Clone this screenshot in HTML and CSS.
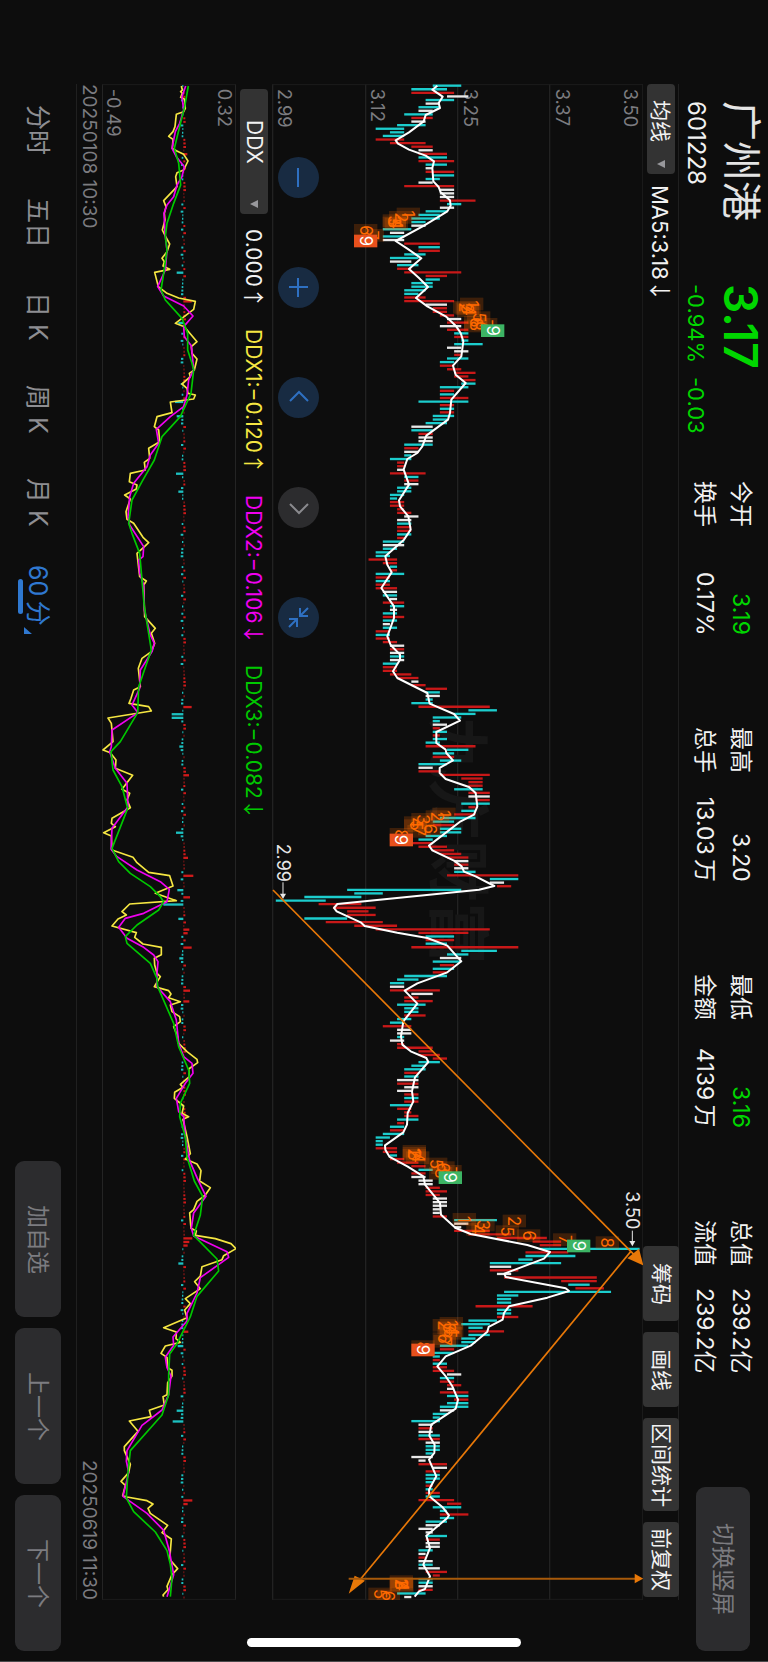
FILE: index.html
```html
<!DOCTYPE html>
<html lang="zh-CN">
<head>
<meta charset="UTF-8">
<meta name="viewport" content="width=device-width, initial-scale=1.0">
<title>广州港 601228</title>
<link rel="stylesheet" href="styles.css">
</head>
<body>
<header class="quote">
  <div class="stock">
    <h1>广州港</h1>
    <span class="code">601228</span>
  </div>
  <div class="price down">
    <strong>3.17</strong>
    <div class="change"><span>-0.94%</span><span>-0.03</span></div>
  </div>
  <dl class="stats">
    <div><dt>今开</dt><dd class="down">3.19</dd></div>
    <div><dt>最高</dt><dd>3.20</dd></div>
    <div><dt>最低</dt><dd class="down">3.16</dd></div>
    <div><dt>总值</dt><dd>239.2亿</dd></div>
    <div><dt>换手</dt><dd>0.17%</dd></div>
    <div><dt>总手</dt><dd>13.03&thinsp;万</dd></div>
    <div><dt>金额</dt><dd>4139&thinsp;万</dd></div>
    <div><dt>流值</dt><dd>239.2亿</dd></div>
  </dl>
  <button type="button" class="btn">切换竖屏</button>
</header>

<div class="toolbar">
  <label class="picker picker-ma">
    <select aria-label="主图指标"><option>均线</option></select>
    <svg class="caret" viewBox="0 0 8 8"><path d="M8 0v8L0 4z"/></svg>
  </label>
  <span class="ma">MA5:3.18<span class="arrow">↓</span></span>
  <div class="tools">
    <button type="button">筹码</button>
    <button type="button">画线</button>
    <button type="button" class="wide">区间统计</button>
    <button type="button">前复权</button>
  </div>
</div>

<div class="chart">
  <svg id="kline" viewBox="34 43 1114 4548" preserveAspectRatio="xMinYMin meet"></svg>
  <div class="controls">
    <button type="button" aria-label="缩小"><svg viewBox="0 0 41 41"><path d="M20 11v19"/></svg></button>
    <button type="button" aria-label="放大"><svg viewBox="0 0 41 41"><path d="M20 11v19M11 20h19"/></svg></button>
    <button type="button" aria-label="左移"><svg viewBox="0 0 41 41"><path d="M12 24l9-9 9 9"/></svg></button>
    <button type="button" aria-label="右移" class="off"><svg viewBox="0 0 41 41"><path d="M12 17l9 9 9-9"/></svg></button>
    <button type="button" aria-label="收起"><svg viewBox="0 0 41 41"><path d="M22 11v8h8M22 19l8-8M11 22h8v8M19 22l-8 8"/></svg></button>
  </div>
</div>

<div class="indicator">
  <label class="picker picker-ddx">
    <select aria-label="副图指标"><option>DDX</option></select>
    <svg class="caret" viewBox="0 0 8 8"><path d="M8 0v8L0 4z"/></svg>
  </label>
  <span>0.000<span class="arrow">↑</span></span>
  <span class="ddx1">DDX1:−0.120<span class="arrow">↑</span></span>
  <span class="ddx2">DDX2:−0.106<span class="arrow">↓</span></span>
  <span class="ddx3">DDX3:−0.082<span class="arrow">↓</span></span>
</div>

<div class="subchart">
  <svg id="ddx" viewBox="305 72 402 4548" preserveAspectRatio="xMinYMin meet"></svg>
</div>

<div class="dates"><span>20250108 10:30</span><span>20250619 11:30</span></div>

<footer>
  <nav>
    <a href="#">分时</a>
    <a href="#">五日</a>
    <a href="#">日 K</a>
    <a href="#">周 K</a>
    <a href="#">月 K</a>
    <a href="#" class="active">60&thinsp;分</a>
  </nav>
  <div class="actions">
    <button type="button" class="btn">加自选</button>
    <button type="button" class="btn">上一个</button>
    <button type="button" class="btn">下一个</button>
  </div>
</footer>
<div class="home-bar"></div>

<script src="chart.js"></script>
</body>
</html>
```
FILE: styles.css
```css
* {
  box-sizing: border-box;
}
html {
  background-color: #0d0d0d;
}
/* the whole screen is held sideways: lines run down, blocks run right to left */
body {
  margin: 0;
  width: 100vw;
  height: 100vh;
  position: relative;
  display: flex;
  flex-direction: column;
  overflow: hidden;
  writing-mode: vertical-rl;
  text-orientation: sideways;
  background-color: #0d0d0d;
  box-shadow: inset 0 -1px #4a4a4c;
  color: #f2f2f2;
  font-family: Inter, "Noto Sans CJK SC", sans-serif;
  font-size: 22px;
  line-height: 28px;
  white-space: nowrap;
}
button, select {
  font: inherit;
  color: inherit;
  writing-mode: inherit;
  text-orientation: inherit;
  border: 0;
  margin: 0;
  padding: 0;
}
h1, dl, dd {
  margin: 0;
}
.down {
  color: #00d600;
}
.btn {
  block-size: 46px;
  inline-size: 156px;
  border-radius: 9px;
  background-color: #2c2c2e;
  color: #7c7c80;
  font-size: 23px;
}

/* quote header */
.quote {
  block-size: 89px;
  display: flex;
  padding-inline: 101px 11px;
  padding-block-start: 7px;
}
.stock {
  inline-size: 183px;
}
.stock h1 {
  font-size: 40px;
  line-height: 40px;
  font-weight: 400;
  color: #e4e4e4;
}
.code {
  display: block;
  margin-block-start: 11px;
  font-size: 24px;
}
.price {
  inline-size: 197px;
}
.price strong {
  display: block;
  font-size: 46px;
  line-height: 40px;
  font-weight: 600;
}
.change {
  display: flex;
  gap: 14px;
  margin-block-start: 11px;
}
.stats {
  flex: 1;
  display: grid;
  grid-template-columns: repeat(4, 1fr);
  grid-auto-rows: 36px;
  column-gap: 92px;
  padding-block-start: 2px;
  line-height: 36px;
  font-size: 23px;
}
.stats div {
  display: flex;
  justify-content: space-between;
}
.quote .btn {
  block-size: 54px;
  inline-size: 164px;
  margin-inline-start: 113px;
  margin-block-start: 11px;
}

/* row over the price chart */
.toolbar {
  block-size: 36px;
  display: flex;
  align-items: center;
  margin-inline: 84px 62px;
  border-block-start: 1px solid #202020;
}
.picker {
  position: relative;
  block-size: 28px;
  border-radius: 4px;
  background-color: #333333;
}
.picker select {
  appearance: none;
  inline-size: 100%;
  block-size: 28px;
  background-color: transparent;
}
.picker-ma {
  inline-size: 90px;
}
.picker-ma select {
  padding-inline-start: 16px;
  font-size: 21px;
}
.caret {
  position: absolute;
  inset-inline-end: 6px;
  inset-block-start: 10px;
  width: 8px;
  height: 8px;
  fill: #98989c;
}
.ma {
  margin-inline-start: 11px;
}
.arrow {
  font-family: "Noto Sans CJK SC", sans-serif;
}
.tools {
  margin-inline: auto 3px;
  display: flex;
  gap: 11px;
}
.tools button {
  inline-size: 75px;
  block-size: 36px;
  border-radius: 4px;
  background-color: #333333;
  font-size: 21px;
}
.tools .wide {
  inline-size: 93px;
}

/* charts */
.chart {
  flex: 1;
  position: relative;
  margin-inline: 84px 62px;
}
.chart svg, .subchart svg {
  display: block;
  width: 100%;
  height: 100%;
}
svg text {
  writing-mode: horizontal-tb;
}
.controls {
  position: absolute;
  inset-block-end: 6px;
  inset-inline-start: 73px;
  display: flex;
  gap: 69px;
}
.controls button {
  width: 41px;
  height: 41px;
  border-radius: 50%;
  background-color: #182b42;
}
.controls svg {
  fill: none;
  stroke: #2e70c2;
  stroke-width: 2;
}
.controls .off {
  background-color: #2c2c2e;
}
.controls .off svg {
  stroke: #8a8a8e;
}
.indicator {
  block-size: 36px;
  display: flex;
  align-items: center;
  gap: 21px;
  margin-inline: 89px 62px;
  font-size: 21px;
}
.picker-ddx {
  inline-size: 125px;
  margin-inline-end: -6px;
}
.picker-ddx select {
  padding-inline-start: 31px;
}
.ddx1 {
  color: #f5e642;
}
.ddx2 {
  color: #f000f0;
}
.ddx3 {
  color: #00c800;
}
.subchart {
  block-size: 134px;
  margin-inline: 84px 62px;
}
.dates {
  block-size: 26px;
  display: flex;
  justify-content: space-between;
  margin-inline: 84px 62px;
  border-block-end: 1px solid #202020;
  font-size: 19px;
  line-height: 26px;
  color: #7c7c80;
}

/* bottom row */
footer {
  block-size: 76px;
  display: flex;
  align-items: center;
  justify-content: space-between;
  padding-inline: 84px 11px;
}
nav {
  display: grid;
  grid-template-columns: repeat(6, 93px);
  text-align: center;
  font-size: 25px;
}
nav a {
  position: relative;
  color: #8e8e92;
  text-decoration: none;
}
nav .active {
  color: #2f78d0;
}
nav .active::before {
  content: "";
  position: absolute;
  inset-inline: 30px 28px;
  inset-block-end: -6px;
  block-size: 5px;
  border-radius: 3px;
  background-color: #2f78d0;
}
nav .active::after {
  content: "";
  position: absolute;
  inset-inline-end: 8px;
  inset-block-end: 0;
  width: 8px;
  height: 7px;
  background-color: #2f78d0;
  clip-path: polygon(0 0, 100% 100%, 0 100%);
}
.actions {
  display: flex;
  gap: 11px;
}
.home-bar {
  position: absolute;
  bottom: 15px;
  left: 247px;
  width: 274px;
  height: 9px;
  border-radius: 5px;
  background-color: #ffffff;
}
```
FILE: chart.js
```js
// One token per hourly bar: colour (c falling, r rising, w flat), low, high in cents above 3.00
const bars = `
c21,25 c18,23 r18,24 w23,26 c20,24 w20,22 c19,22 w19,21 c17,21 r18,21 w18,20 c16,20 c13,17 c15,17 c14,17 r13,17 r15,20 r18,21 w19,21 r19,23
c19,23 r19,24 c20,23 w20,21 r20,24 c21,24 c20,22 w19,21 r17,24 w22,24 w22,24 w22,24 r22,27 c23,25 w22,24 c20,23 c19,22 c18,22 c18,20 w18,20
c14,18 w15,17 c14,17 w14,17 r17,22 c19,22 r19,22 c17,20 c15,19 w15,18 c16,19 r16,18 r17,25 r20,23 c20,22 c18,21 c18,21 c17,20 c17,19 r17,20
r17,24 w20,23 r21,23 r21,23 r22,24 w23,25 r23,26 w22,25 r23,26 c24,26 r24,26 c25,26 c24,28 w23,25 w24,26 r24,25 c23,26 c22,24 r22,24 r23,25
r24,27 r24,26 r25,27 c25,27 c22,26 r22,24 c22,24 r22,26 c19,26 r22,24 c22,24 r22,24 c21,24 c21,23 c20,23 w18,21 c18,21 r19,21 w19,21 w19,21
c17,21 r17,19 w17,19 c17,18 c15,18 r16,17 r16,17 w16,17 r15,20 c17,19 r17,19 w17,19 c16,18 c16,18 c15,17 c15,16 r15,17 r15,17 r16,17 r16,18
w17,19 w16,18 c16,18 r16,18 r16,18 c16,18 r16,17 c14,17 w14,17 c14,16 c13,15 c13,15 r12,16 r14,16 c15,16 r15,16 c13,17 r13,15 c13,15 r13,15
r13,16 w14,16 c14,16 w15,16 r14,17 c15,17 w15,16 c14,16 r14,17 c14,16 w14,15 c14,16 r13,15 c13,15 r13,15 r14,16 w15,17 r15,17 w15,17 c15,17
w15,17 c14,16 r14,16 r14,16 r15,18 r16,19 w18,19 r18,20 r20,23 c20,22 w20,22 c20,21 c18,21 r19,29 c26,30 c24,27 c21,25 c21,22 w21,23 r21,22
c21,23 r21,22 c21,23 c20,22 r20,27 c23,26 c21,24 r21,24 c22,25 c19,23 w19,21 r19,22 r22,29 r25,28 r26,28 r26,28 c24,28 r26,29 w26,29 r27,29
c25,29 r26,27 c25,27 r24,27 c22,27 c21,24 r21,24 c22,25 c22,25 c20,23 c19,21 r18,21 r19,23 r21,24 r22,25 r23,26 w24,26 r24,26 w24,26 c24,27
r23,33 c29,33 w29,31 r30,32 c9,25 c10,14 c3,11 c-1,6 r5,11 r7,13 r9,12 r9,13 c3,9 r6,14 r10,16 r13,29 r19,26 c20,24 r20,24 c20,23
r18,33 c25,30 c23,26 w22,25 c21,25 r22,24 c21,24 r21,23 c17,23 c16,19 c15,17 w15,17 r15,22 w18,21 r17,19 r17,21 c16,20 c17,19 c17,19 r17,20
c16,18 c15,17 r14,18 w16,18 w16,18 c16,17 w15,17 r16,17 r16,21 r19,21 r19,22 r21,23 c19,22 c18,20 c17,20 r17,19 c17,19 w16,19 r16,19 w17,19
w16,18 r17,19 c17,19 r17,19 c15,18 r16,18 r17,18 r17,19 c16,19 r16,17 c15,17 r15,17 c14,17 c13,15 c13,14 c13,14 r13,16 r14,16 c15,16 r15,17
r16,19 r18,20 c19,21 r18,20 w18,20 w19,21 w19,21 r20,22 r20,23 r20,22 w21,23 w21,23 w21,23 w21,22 w21,22 r21,23 c24,30 w24,26 w24,25 r24,29
r26,32 r30,37 r35,39 r36,39 c36,50 r34,40 c34,41 c33,35 c29,39 w29,32 r29,33 w30,32 r31,44 r39,44 c40,43 r41,45 c31,46 c30,33 c30,32 c30,32
r27,35 c30,32 c30,32 r30,33 c26,30 c25,29 c26,28 r26,31 c26,29 c25,27 c25,27 c22,26 r22,24 c21,24 c21,22 r21,22 c21,23 r21,23 r21,24 w23,25
c22,24 r22,24 r23,25 w23,24 r22,26 c23,26 r24,26 c23,26 c22,26 w22,24 c21,23 c21,22 c18,22 w19,21 r19,21 w19,21 c19,22 r19,22 w20,22 c20,22
c20,22 c20,21 w18,21 w19,20 r19,23 w21,23 r20,22 c20,22 c20,22 c20,21 r20,21 c20,21 r20,22 c20,22 r19,24 r23,25 c21,25 c22,23 r22,26 c22,24
c20,23 w20,22 w19,21 w20,21 c20,23 r20,22 w20,22 w20,22 c19,21 w19,20 r19,20 w19,21 c19,21 w19,22 r20,23 r21,22 c19,21 c19,21 w19,21 r19,21
c16,20 w17,18`.trim().split(/\s+/);

const ma5 = `530,48 515,60 546,81 534,100 538,115 495,136 489,155 445,188 405,212 412,222 445,240 495,258 520,275 515,295 518,335 534,352
540,368 568,392 570,408 560,425 490,468 405,514 440,537 482,566 445,598 475,625 502,652 466,685 500,710 555,740 585,768 600,790 608,815
602,860 577,888 585,915 615,940 572,990 568,1030 562,1050 497,1098 485,1130 470,1150 440,1168 429,1200 445,1245 415,1292 418,1310
443,1340 450,1380 430,1410 374,1460 380,1485 393,1508 362,1555 400,1610 400,1645 380,1700 390,1726 418,1755 418,1770 397,1805 410,1825
500,1870 507,1902 580,1933 598,1953 527,1987 527,2020 555,2040 557,2050 577,2072 537,2095 537,2110 555,2128 625,2152 645,2170 650,2210
640,2235 600,2255 505,2328 515,2342 580,2373 603,2390 610,2406 645,2420 701,2449 655,2460 230,2503 220,2515 228,2525 300,2558 312,2569
410,2589 500,2605 560,2628 602,2675 560,2708 470,2741 432,2763 470,2802 428,2855 421,2900 425,2925 450,2945 497,2965 503,2977 463,3023
454,3065 458,3095 441,3130 439,3165 428,3188 373,3227 374,3240 387,3262 440,3290 488,3320 493,3345 538,3400 541,3435 585,3475 630,3493
800,3526 868,3547 850,3567 731,3612 735,3622 915,3656 925,3664 860,3684 745,3710 730,3730 726,3750 684,3772 680,3786 630,3828 555,3860
530,3890 553,3917 575,3950 592,3990 585,4017 512,4065 506,4098 522,4125 521,4150 505,4170 527,4220 505,4260 506,4280 545,4312 565,4337
560,4345 497,4398 508,4435 488,4485 508,4520 493,4558 475,4565 462,4581`;

const ddx1 = `543,78 546,90 541,95 546,100 541,112 553,118 555,145 550,155 528,163 524,200 518,215 505,229 518,238 516,265 528,272
550,283 563,303 550,330 530,338 526,350 530,380 490,422 497,440 492,460 494,480 486,510 496,530 508,552 500,575 485,595 492,605 488,618
508,628 463,637 474,680 500,700 535,714 585,724 580,748 525,790 552,800 590,845 573,860 575,880 590,897 582,930 567,940 570,950 545,972
560,985 563,1000 585,1005 580,1017 510,1026 515,1058 470,1070 462,1100 475,1110 478,1145 445,1165 448,1195 432,1207 435,1230 390,1240
387,1265 410,1275 408,1287 373,1305 390,1317 377,1355 380,1378 400,1390 428,1432 445,1448 430,1462 410,1480 418,1550 438,1563 430,1575
433,1670 465,1705 453,1720 463,1750 453,1775 425,1795 414,1825 420,1880 400,1890 392,1915 386,1930 445,1940 453,1953 323,1974 333,1990
335,2010 338,2045 308,2070 330,2078 347,2100 345,2125 397,2146 365,2188 388,2200 380,2220 390,2243 335,2275 333,2290 345,2300 310,2318
333,2328 335,2370 398,2392 410,2408 445,2437 508,2447 518,2478 465,2500 528,2522 388,2532 365,2555 378,2565 353,2577 335,2598 408,2618
403,2632 428,2652 483,2662 483,2684 462,2695 463,2715 470,2740 480,2750 462,2780 505,2792 512,2802 505,2813 540,2825 510,2835 515,2855
538,2870 540,2885 520,2900 532,2930 535,2950 560,2975 590,2998 592,3008 565,3027 567,3050 540,3073 548,3082 523,3097 522,3115 550,3138
545,3160 565,3170 548,3178 560,3230 570,3281 555,3297 590,3312 602,3332 598,3363 630,3383 615,3405 590,3424 580,3449 568,3459 572,3505
588,3513 585,3526 645,3536 692,3551 707,3566 670,3587 665,3599 605,3620 600,3648 583,3665 600,3686 555,3716 570,3731 553,3750 560,3773
490,3803 528,3816 527,3836 540,3847 495,3858 482,3880 500,3892 502,3923 515,3931 515,3948 502,3968 500,4004 488,4010 492,4035 447,4051
452,4070 387,4083 413,4114 372,4160 372,4172 390,4213 385,4238 362,4264 375,4276 367,4307 380,4311 440,4322 458,4332 443,4345 450,4360
502,4396 485,4418 513,4437 508,4498 532,4526 515,4544 500,4579 503,4589 488,4605 490,4610`;

const ddx2 = `556,78 545,110 550,150 538,190 525,215 515,265 528,290 552,320 545,350 530,375 520,410 500,435 491,460 494,520 500,570
495,630 472,680 490,708 550,738 578,768 550,800 552,830 573,857 580,930 565,960 560,1005 550,1040 510,1070 468,1108 475,1150 450,1185
440,1220 400,1270 388,1310 383,1370 388,1395 430,1460 428,1490 415,1500 418,1540 430,1575 432,1650 450,1725 462,1750 455,1775 420,1830
418,1885 395,1935 413,1958 335,2010 333,2060 328,2075 345,2125 380,2170 383,2240 335,2305 332,2368 350,2390 410,2430 480,2465 507,2488
500,2525 430,2560 375,2575 355,2602 380,2635 430,2662 460,2685 473,2705 470,2740 470,2780 510,2825 528,2880 535,2950 550,2990 575,3010
578,3040 555,3070 528,3115 535,3155 550,3170 555,3230 568,3302 590,3353 617,3409 580,3459 573,3505 580,3528 680,3575 685,3592 600,3653
590,3699 560,3760 560,3783 518,3831 520,3856 495,3892 500,3923 512,3948 505,4004 485,4050 425,4096 380,4172 378,4203 385,4238 368,4309
440,4360 490,4411 507,4472 520,4544 500,4610`;

const ddx3 = `564,78 553,140 538,200 522,265 535,310 541,375 520,430 500,490 495,530 500,570 490,640 482,690 495,720 545,775 562,820
562,870 575,910 580,930 572,1000 540,1070 485,1130 480,1145 462,1200 425,1265 395,1320 385,1390 395,1420 418,1480 432,1640 453,1770
415,1880 412,1958 360,2045 332,2075 338,2130 365,2180 382,2245 335,2365 355,2405 390,2440 450,2480 480,2510 490,2525 475,2550 410,2595
375,2630 380,2650 450,2710 470,2755 472,2780 520,2890 535,2960 565,3030 568,3070 540,3130 538,3170 555,3230 560,3291 582,3363 607,3409
600,3465 580,3526 650,3597 655,3633 590,3709 570,3770 530,3851 508,3882 505,3943 505,4004 485,4065 390,4172 382,4248 378,4314 400,4355
465,4416 500,4472 510,4513 515,4554 510,4610`;

// the few money-flow bars that stand out, by bar number
const flow = {19: 12, 52: -20, 60: 25, 66: -15, 88: -25, 92: -20, 108: -22, 113: -15, 173: 25, 175: -35, 176: -35, 184: -12, 192: 17,
  208: -22, 215: 14, 220: 30, 224: -18, 226: 20, 228: -60, 232: -15, 235: 18, 236: 13, 240: 25, 243: -12, 252: 20, 255: 18,
  321: 27, 322: 18, 323: 13, 328: -15, 347: 15, 351: -17, 369: -20, 372: -32, 394: 27, 395: 13};

// nine-turn counts: digit, left, top
const counts = [
  [1, 408, 414], [2, 385, 424], [3, 366, 434], [5, 366, 441], [4, 372, 444], [7, 300, 478], [6, 280, 463],
  [1, 598, 684], [2, 577, 694], [3, 585, 698], [4, 590, 704], [5, 619, 725], [7, 640, 745], [6, 610, 739], [8, 610, 750],
  [1, 515, 2214], [2, 495, 2222], [3, 452, 2230], [4, 430, 2240], [5, 430, 2249], [6, 472, 2259], [7, 440, 2266], [8, 387, 2275],
  [1, 426, 3226], [2, 426, 3232], [3, 426, 3238], [4, 436, 3245], [5, 490, 3264], [6, 512, 3275], [7, 533, 3286], [8, 505, 3292],
  [1, 576, 3430], [3, 632, 3447], [4, 617, 3460], [2, 726, 3435], [5, 705, 3467], [6, 769, 3479], [7, 877, 3491], [8, 1005, 3500],
  [1, 537, 3742], [2, 516, 3748], [3, 530, 3756], [4, 538, 3764], [5, 534, 3772], [6, 516, 3788], [7, 518, 3796], [8, 452, 3812],
  [1, 387, 4517], [2, 387, 4522], [3, 387, 4527], [4, 389, 4530], [5, 323, 4554], [6, 348, 4560]];
const nines = [['#e8501c', 280, 495], ['#3cb464', 661, 764], ['#e8501c', 387, 2292], ['#3cb464', 534, 3305], ['#3cb464', 919, 3510], ['#e8501c', 452, 3822]];

const colors = {c: '#1ccdcd', r: '#c81818', w: '#e8e8e8'};
const STEP = 10.77;

function line(x1, y1, x2, y2, color, width) {
  return `<line x1="${x1}" y1="${y1}" x2="${x2}" y2="${y2}" stroke="${color}" stroke-width="${width}"/>`;
}
function poly(points, color, width) {
  return `<polyline points="${points}" fill="none" stroke="${color}" stroke-width="${width}" stroke-linejoin="round"/>`;
}
// text that reads downwards, x is its baseline
function label(text, x, y, color, size, extra = '') {
  return `<text transform="translate(${x} ${y}) rotate(90)" fill="${color}" font-size="${size}" ${extra}>${text}</text>`;
}

function drawKline() {
  let s = '';
  for (const x of [36, 315, 591, 867, 1147]) s += line(x, 43, x, 4591, '#222222', 4);
  s += line(34, 45, 1148, 45, '#1c1c1c', 3) + line(34, 4589, 1148, 4589, '#1c1c1c', 3);
  s += label('九方财富', 524, 1940, '#171717', 186, 'font-weight="700"');
  [['2.99', 53], ['3.12', 331], ['3.25', 609], ['3.37', 887], ['3.50', 1090]].forEach(([t, x]) => {
    s += label(t, x, 57, '#7c7c80', 55);
  });
  bars.forEach((bar, i) => {
    const [lo, hi] = bar.slice(1).split(',').map(Number);
    const y = 48 + i * STEP;
    s += line(345 + (lo - 13) * 21.4, y, 345 + (hi - 13) * 21.4, y, colors[bar[0]], 7);
  });
  for (const [n, x, y] of counts) {
    s += `<rect x="${x}" y="${y}" width="70" height="38" fill="#ff6a00" fill-opacity="0.2"/>`;
    s += label(n, x + 17, y + 19, '#ff6a00', 50, 'text-anchor="middle"');
  }
  s += poly(ma5, '#ffffff', 6);
  for (const [color, x, y] of nines) {
    s += `<rect x="${x}" y="${y}" width="70" height="38" fill="${color}"/>`;
    s += label(9, x + 17, y + 19, '#ffffff', 50, 'text-anchor="middle"');
  }
  s += label('2.99', 48, 2322, '#e8e8e8', 54) + line(67, 2438, 67, 2475, '#e8e8e8', 3);
  s += '<path d="M58 2472h18l-9 16z" fill="#e8e8e8"/>';
  s += label('3.50', 1095, 3365, '#e8e8e8', 54) + line(1115, 3483, 1115, 3518, '#e8e8e8', 3);
  s += '<path d="M1106 3514h18l-9 16z" fill="#e8e8e8"/>';
  // hand-drawn trend arrows
  s += line(37, 2461, 1120, 3555, '#e87808', 5) + '<path d="M1148 3587L1100 3566L1135 3537z" fill="#e87808"/>';
  s += line(1110, 3546, 300, 4528, '#e87808', 5) + '<path d="M264 4572L282 4518L313 4533z" fill="#e87808"/>';
  s += line(264, 4527, 1130, 4527, '#a85a0a', 6) + '<path d="M1148 4527L1122 4512V4541z" fill="#e87808"/>';
  document.getElementById('kline').innerHTML = s;
}

function drawDdx() {
  let s = '';
  for (const x of [306, 706]) s += line(x, 72, x, 4620, '#242424', 4);
  s += line(305, 74, 708, 74, '#1c1c1c', 3) + line(305, 4618, 708, 4618, '#1c1c1c', 3);
  s += label('-0.49', 320, 86, '#7c7c80', 55) + label('0.32', 654, 86, '#7c7c80', 55);
  bars.forEach((bar, i) => {
    const big = flow[i];
    const size = 3 + i * 7 % 6;
    const len = big || (bar[0] === 'c' ? -size : size);
    const y = 78 + i * STEP;
    const color = len < 0 ? '#1cc0c0' : (size > 5 || big ? '#d01a1a' : '#7a1616');
    s += line(549, y, 549 + len, y, color, big ? 7 : 6);
  });
  s += poly(ddx1, '#f5e642', 5) + poly(ddx2, '#f000f0', 5) + poly(ddx3, '#00c800', 5);
  document.getElementById('ddx').innerHTML = s;
}

drawKline();
drawDdx();
```
